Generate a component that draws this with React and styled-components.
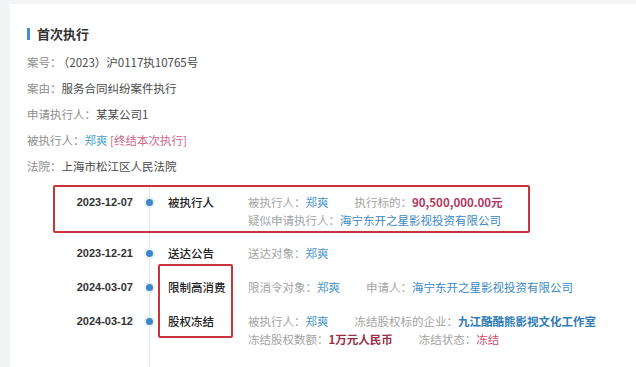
import styled, { createGlobalStyle } from "styled-components";

const GlobalStyle = createGlobalStyle`
  html, body {
    margin: 0;
    padding: 0;
    background: #f3f4f6;
    font-family: "Noto Sans CJK SC", "Noto Sans", "Liberation Sans", sans-serif;
  }
`;

const Page = styled.div`
  padding: 4px 0 0 10px;
  height: 363px;
  overflow: hidden;
`;

const Card = styled.div`
  background: #fff;
  height: 100%;
  padding: 20px 0 0 17px;
  box-sizing: border-box;
`;

const Title = styled.div`
  display: flex;
  align-items: center;
  gap: 7px;
  font-size: 13px;
  font-weight: 700;
  color: #333;
  line-height: 20px;
  margin-bottom: 5px;

  &::before {
    content: "";
    width: 3px;
    height: 12px;
    background: #3d8fcf;
  }
`;

const InfoRow = styled.div`
  font-size: 11.5px;
  line-height: 26px;
  color: #4a4a4a;
`;

const Label = styled.span`
  color: ${(p) => p.color || "#8e8e8e"};
  margin-right: ${(p) => (p.wide ? "2px" : "0")};
`;

const Value = styled.span`
  color: ${(p) => p.color || "#4a94cc"};
  font-weight: ${(p) => (p.bold ? 600 : 400)};
`;

const Timeline = styled.div`
  position: relative;
  margin: 6px 0 0 26px;

  &::before {
    content: "";
    position: absolute;
    left: 96px;
    top: 0;
    bottom: -40px;
    width: 1px;
    background: #e3e7ec;
  }
`;

const Event = styled.div`
  position: relative;
  display: grid;
  grid-template-columns: 80px 32px 83px 1fr;
  padding: 8px 0;
  font-size: 11.5px;
  line-height: 18px;

  ${(p) =>
    p.highlight &&
    `
    padding-bottom: 7px;
    &::after {
      content: "";
      position: absolute;
      left: 0;
      top: 0;
      width: 477px;
      bottom: 3px;
      border: 2px solid #c7353a;
      border-radius: 2px;
      box-sizing: border-box;
    }
  `}
`;

const Date = styled.div`
  text-align: right;
  font-weight: 700;
  font-size: 11px;
  color: #333;
  font-family: "Liberation Sans", "Noto Sans CJK SC", sans-serif;
`;

const DotCell = styled.div`
  display: flex;
  justify-content: center;
  padding-top: 6px;

  &::before {
    content: "";
    width: 7px;
    height: 7px;
    border-radius: 50%;
    background: #3f86c4;
    box-shadow: 0 0 0 2px #e4f0fa;
    position: relative;
    z-index: 1;
  }
`;

const EventName = styled.div`
  padding-left: 3px;
  font-weight: 500;
  color: #222;
`;

const Details = styled.div`
  display: flex;
  flex-direction: column;
`;

const Line = styled.div`
  display: flex;
  gap: 26px;
  white-space: nowrap;
`;

const Mark = styled.div`
  position: absolute;
  left: 105px;
  top: 79px;
  width: 75px;
  height: 74px;
  border: 2px solid #c7353a;
  border-radius: 2px;
  box-sizing: border-box;
`;

const info = [
  ["案号：", <span>（2023）沪0117执10765号</span>],
  ["案由：", <span>服务合同纠纷案件执行</span>],
  ["申请执行人：", <span>某某公司1</span>],
  [
    "被执行人：",
    <>
      <Value color="#4aa3c9">郑爽</Value> <Value color="#d2658a">[终结本次执行]</Value>
    </>,
  ],
  ["法院：", <span>上海市松江区人民法院</span>],
];

const events = [
  {
    date: "2023-12-07",
    name: "被执行人",
    highlight: true,
    lines: [
      [
        ["被执行人：", "郑爽"],
        ["执行标的：", "90,500,000.00元", "#b3385f", true],
      ],
      [["疑似申请执行人：", "海宁东开之星影视投资有限公司", "#3b88c4"]],
    ],
  },
  {
    date: "2023-12-21",
    name: "送达公告",
    lines: [[["送达对象：", "郑爽"]]],
  },
  {
    date: "2024-03-07",
    name: "限制高消费",
    lines: [
      [
        ["限消令对象：", "郑爽"],
        ["申请人：", "海宁东开之星影视投资有限公司", "#3b88c4"],
      ],
    ],
  },
  {
    date: "2024-03-12",
    name: "股权冻结",
    lines: [
      [
        ["被执行人：", "郑爽"],
        ["冻结股权标的企业：", "九江酷酷熊影视文化工作室", "#2f7bb5", true],
      ],
      [
        ["冻结股权数额：", "1万元人民币", "#9a2f45", true],
        ["冻结状态：", "冻结", "#d2506e"],
      ],
    ],
  },
  {
    date: "",
    name: "",
    lines: [
      [
        ["被执行人：", "郑爽"],
        ["冻结股权标的企业：", "九江酷酷熊影视文化工作室", "#2f7bb5", true],
      ],
    ],
  },
];

export default function App() {
  return (
    <>
      <GlobalStyle />
      <Page>
        <Card>
          <Title>首次执行</Title>
          {info.map(([label, value], i) => (
            <InfoRow key={label}>
              <Label wide={i === 0}>{label}</Label>
              {value}
            </InfoRow>
          ))}
          <Timeline>
            {events.map((ev, i) => (
              <Event key={i} highlight={ev.highlight}>
                <Date>{ev.date}</Date>
                {ev.date ? <DotCell /> : <div />}
                <EventName>{ev.name}</EventName>
                <Details>
                  {ev.lines.map((line, j) => (
                    <Line key={j}>
                      {line.map(([label, value, color, bold]) => (
                        <span key={label}>
                          <Label color="#a3a3a3">{label}</Label>
                          <Value color={color} bold={bold}>
                            {value}
                          </Value>
                        </span>
                      ))}
                    </Line>
                  ))}
                </Details>
              </Event>
            ))}
            <Mark />
          </Timeline>
        </Card>
      </Page>
    </>
  );
}
